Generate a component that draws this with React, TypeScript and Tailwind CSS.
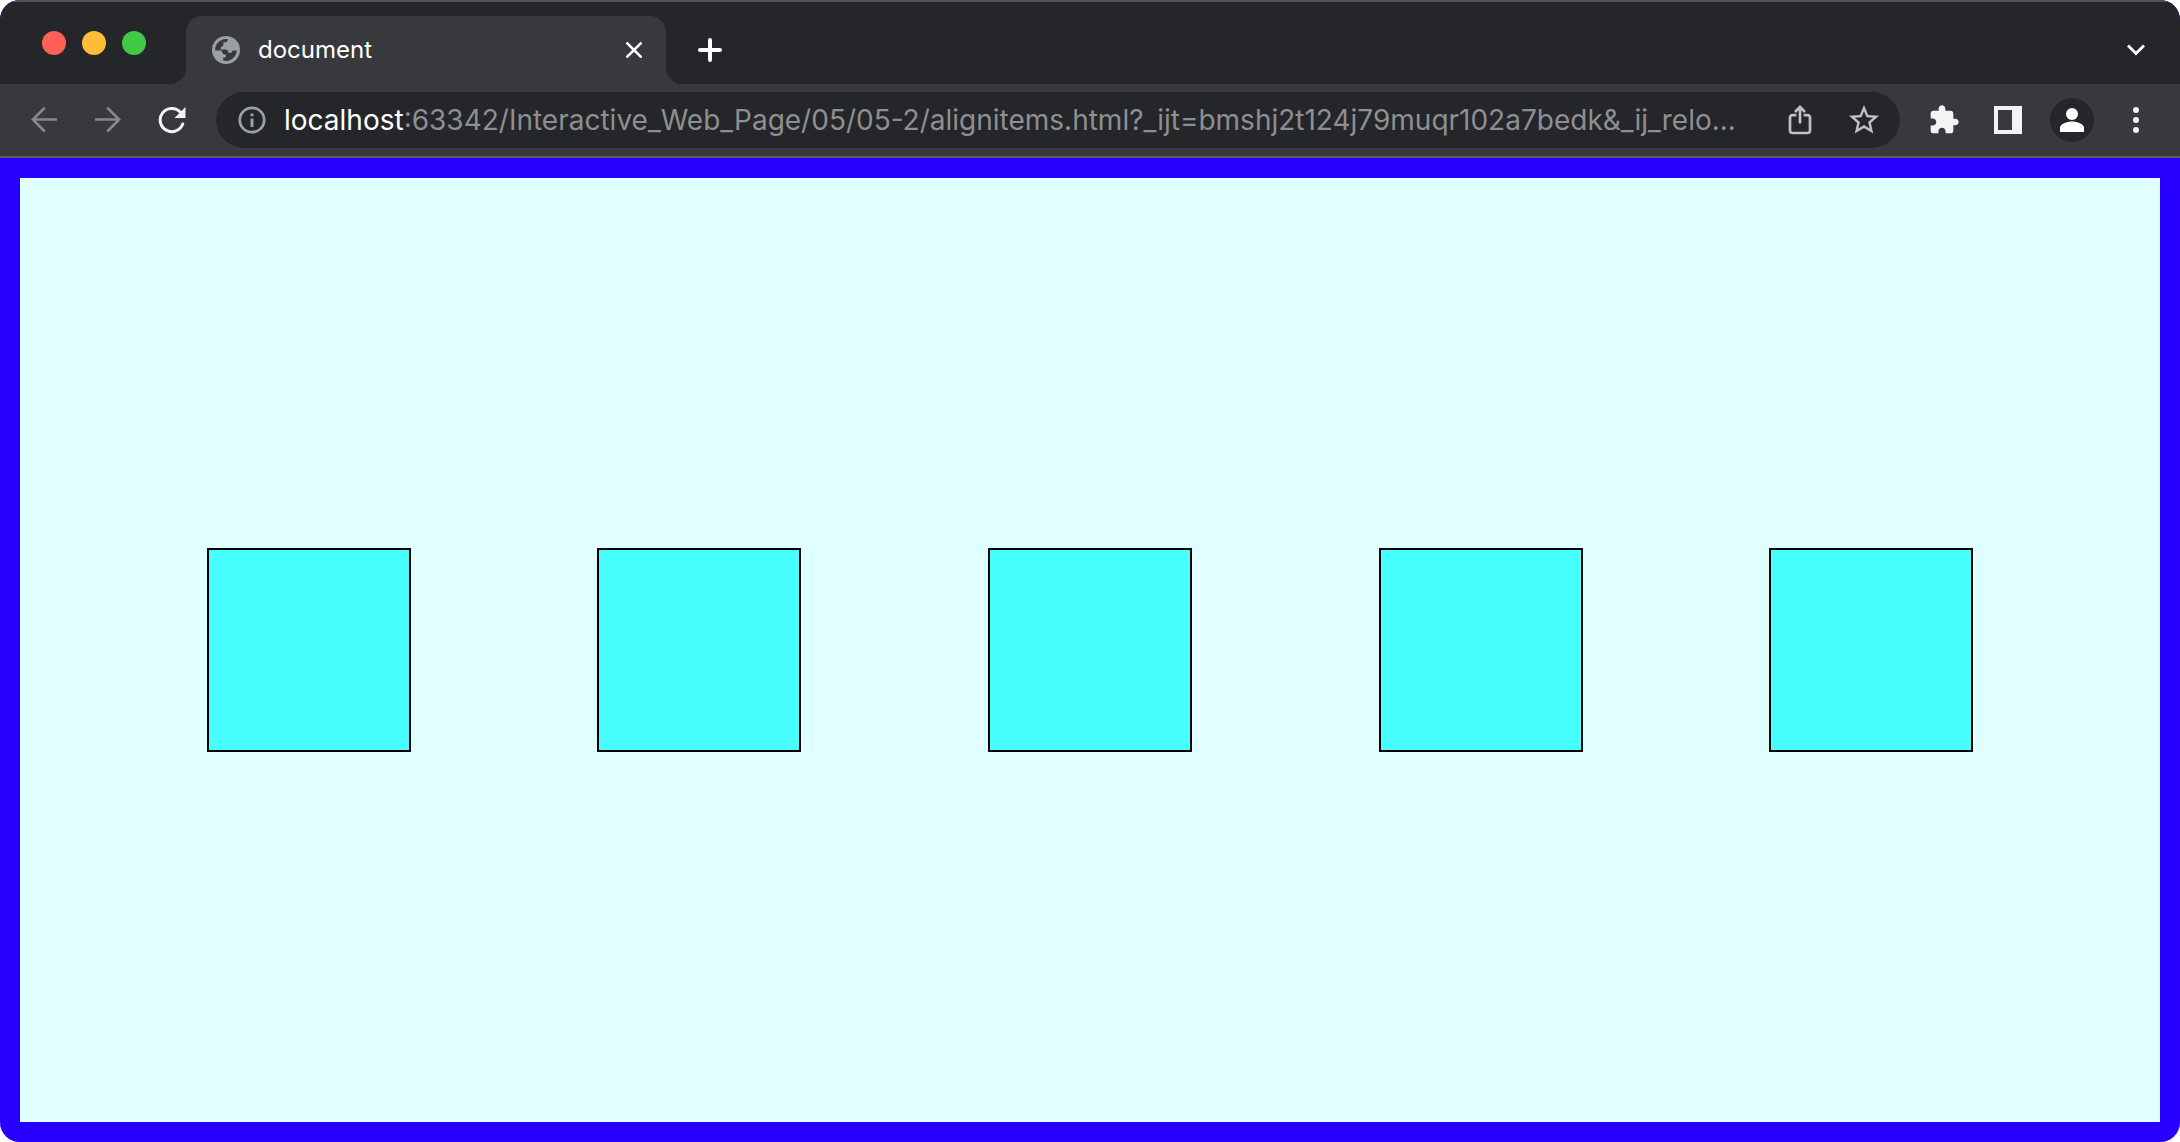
import React from "react";

const BOXES = [1, 2, 3, 4, 5];

function Dot({ label, className }: { label: string; className: string }) {
  return <button aria-label={label} className={`size-6 rounded-full ${className}`} />;
}

function IconButton({ label, children, className = "" }: { label: string; children: React.ReactNode; className?: string }) {
  return (
    <button aria-label={label} className={`flex size-11 shrink-0 items-center justify-center rounded-full ${className}`}>
      {children}
    </button>
  );
}

function TabStrip() {
  return (
    <div className="flex h-21 items-end border-t-2 border-[#505154] bg-[#252629]">
      <div className="flex h-full items-start gap-4 pt-[29px] pl-[42px]">
        <Dot label="Close window" className="bg-[#ff6158]" />
        <Dot label="Minimize window" className="bg-[#fdbd39]" />
        <Dot label="Zoom window" className="bg-[#41c946]" />
      </div>
      <div className="ml-6 flex h-[68px] items-end">
        <svg width="16" height="16" viewBox="0 0 16 16" aria-hidden="true">
          <path d="M0 16A16 16 0 0 0 16 0V16Z" fill="#38393d" />
        </svg>
        <div className="flex h-[68px] w-[480px] items-center rounded-t-2xl bg-[#38393d] pr-[10px] pl-[26px]">
          <svg width="28" height="28" viewBox="0 0 28 28" aria-hidden="true">
            <circle cx="14" cy="14" r="14" fill="#9aa0a6" />
            <path
              d="M16 3.2C15.8 5 14.8 6 13 6.2L11.4 6.3V8.4C11.4 9.8 10.6 10.8 9 10.8L8.6 13.4H13C15.6 13.4 16.4 15 16.4 17H18.2C19.6 17 20.2 16 20.4 14.6H24.9C24.5 20.4 20 24.8 14.2 25L11.2 24.6V21.4H13.8V18.6C11 18.8 9.8 17 9.6 14.6H3.2C2.8 8.2 7.6 3 14 3Z"
              fill="#38393d"
            />
          </svg>
          <span className="ml-[18px] flex-1 text-2xl text-white">document</span>
          <IconButton label="Close tab">
            <svg width="16" height="16" viewBox="0 0 16 16" stroke="#fff" strokeWidth="2.6" strokeLinecap="round">
              <path d="M1.3 1.3 14.7 14.7M14.7 1.3 1.3 14.7" />
            </svg>
          </IconButton>
        </div>
        <svg width="16" height="16" viewBox="0 0 16 16" aria-hidden="true">
          <path d="M16 16A16 16 0 0 1 0 0V16Z" fill="#38393d" />
        </svg>
      </div>
      <div className="flex h-[68px] flex-1 items-center justify-between pr-[22px] pl-[6px]">
        <IconButton label="New tab">
          <svg width="24" height="24" viewBox="0 0 24 24" stroke="#fff" strokeWidth="4" strokeLinecap="round">
            <path d="M12 2V22M2 12H22" />
          </svg>
        </IconButton>
        <IconButton label="Search tabs">
          <svg width="18" height="12" viewBox="0 0 18 12" fill="none" stroke="#fff" strokeWidth="2.8">
            <path d="M1 1.4 9 9.4 17 1.4" />
          </svg>
        </IconButton>
      </div>
    </div>
  );
}

function Toolbar() {
  return (
    <div className="flex h-[74px] items-center border-b-2 border-[#5c5c60] bg-[#38393d] pr-[22px] pl-[22px]">
      <nav className="flex gap-5">
        <IconButton label="Back">
          <svg width="26" height="26" viewBox="0 0 26 26" fill="none" stroke="#87888a" strokeWidth="2.7" strokeLinecap="round">
            <path d="M25 12.5H2M13 1.5 1.8 12.5 13 23.7" />
          </svg>
        </IconButton>
        <IconButton label="Forward">
          <svg width="26" height="26" viewBox="0 0 26 26" fill="none" stroke="#87888a" strokeWidth="2.7" strokeLinecap="round">
            <path d="M1 12.5H24M13 1.5 24.2 12.5 13 23.7" />
          </svg>
        </IconButton>
        <IconButton label="Reload">
          <svg width="28" height="28" viewBox="0 0 28 28" fill="none">
            <path d="M22.2 6A11.6 11.6 0 1 0 24.7 18" stroke="#f1f3f4" strokeWidth="3" strokeLinecap="round" />
            <path d="M27.5 1V12H16.5Z" fill="#f1f3f4" />
          </svg>
        </IconButton>
      </nav>
      <div className="ml-[22px] flex h-14 min-w-0 flex-1 items-center rounded-full bg-[#252629] pr-[14px] pl-[14px] text-[28px]">
        <IconButton label="View site information">
          <svg width="28" height="28" viewBox="0 0 28 28" fill="none">
            <circle cx="14" cy="14" r="12.2" stroke="#9aa0a6" strokeWidth="2.8" />
            <path d="M14 12.4V21M14 7.4V10.2" stroke="#9aa0a6" strokeWidth="3" />
          </svg>
        </IconButton>
        <label htmlFor="address" className="ml-[10px] text-white">localhost</label>
        <input
          id="address"
          type="text"
          readOnly
          spellCheck={false}
          value=":63342/Interactive_Web_Page/05/05-2/alignitems.html?_ijt=bmshj2t124j79muqr102a7bedk&_ij_relo..."
          className="min-w-0 flex-1 bg-transparent text-[#8e8f92] outline-none"
        />
        <div className="flex gap-5 pl-2">
          <IconButton label="Share this page">
            <svg width="24" height="30" viewBox="0 0 24 30" fill="none" stroke="#c0c1c3" strokeWidth="2.7">
              <path d="M8.4 10.2H4.2A2.2 2.2 0 0 0 2 12.4V25.8A2.2 2.2 0 0 0 4.2 28H19.8A2.2 2.2 0 0 0 22 25.8V12.4A2.2 2.2 0 0 0 19.8 10.2H15.6" />
              <path d="M12 18.6V2.6M7 7 12 2 17 7" />
            </svg>
          </IconButton>
          <IconButton label="Bookmark this tab">
            <svg width="36" height="36" viewBox="0 0 24 24" fill="#c0c1c3">
              <path d="m22 9.24-7.19-.62L12 2 9.19 8.63 2 9.24l5.46 4.73L5.82 21 12 17.27 18.18 21l-1.63-7.03L22 9.24zM12 15.4l-3.76 2.27 1-4.28-3.32-2.88 4.38-.38L12 6.1l1.71 4.04 4.38.38-3.32 2.88 1 4.28L12 15.4z" />
            </svg>
          </IconButton>
        </div>
      </div>
      <div className="ml-[22px] flex gap-5">
        <IconButton label="Extensions">
          <svg width="32" height="32" viewBox="0 0 24 24" fill="#f1f3f4">
            <path d="M20.5 11H19V7c0-1.1-.9-2-2-2h-4V3.5C13 2.12 11.88 1 10.5 1S8 2.12 8 3.5V5H4c-1.1 0-1.99.9-1.99 2v3.8H3.5c1.49 0 2.7 1.21 2.7 2.7s-1.21 2.7-2.7 2.7H2V20c0 1.1.9 2 2 2h3.8v-1.5c0-1.49 1.21-2.7 2.7-2.7 1.49 0 2.7 1.21 2.7 2.7V22H17c1.1 0 2-.9 2-2v-4h1.5c1.38 0 2.5-1.12 2.5-2.5S21.88 11 20.5 11z" />
          </svg>
        </IconButton>
        <IconButton label="Side panel">
          <svg width="28" height="28" viewBox="0 0 28 28">
            <path fillRule="evenodd" d="M0 0H28V28H0ZM4 4V24H18V4Z" fill="#f1f3f4" />
          </svg>
        </IconButton>
        <IconButton label="Profile" className="bg-[#252629]">
          <svg width="24" height="24" viewBox="0 0 24 24" fill="#fff">
            <circle cx="12" cy="6" r="6" />
            <path d="M0 24V20C0 15.8 7 13.6 12 13.6S24 15.8 24 20V24Z" />
          </svg>
        </IconButton>
        <IconButton label="Menu">
          <svg width="6" height="26" viewBox="0 0 6 26" fill="#f1f3f4">
            <circle cx="3" cy="3" r="3" />
            <circle cx="3" cy="13" r="3" />
            <circle cx="3" cy="23" r="3" />
          </svg>
        </IconButton>
      </div>
    </div>
  );
}

export default function App() {
  return (
    <div className="bg-white">
      <div className="flex min-h-screen flex-col overflow-hidden rounded-[20px] bg-[#2800ff] font-['Inter',sans-serif]">
        <header>
          <TabStrip />
          <Toolbar />
        </header>
        <main className="flex flex-1 items-center justify-evenly border-20 border-[#2800ff] bg-[#e0ffff]">
          {BOXES.map((n) => (
            <div key={n} className="size-51 border-2 border-black bg-[#48ffff]" />
          ))}
        </main>
      </div>
    </div>
  );
}
